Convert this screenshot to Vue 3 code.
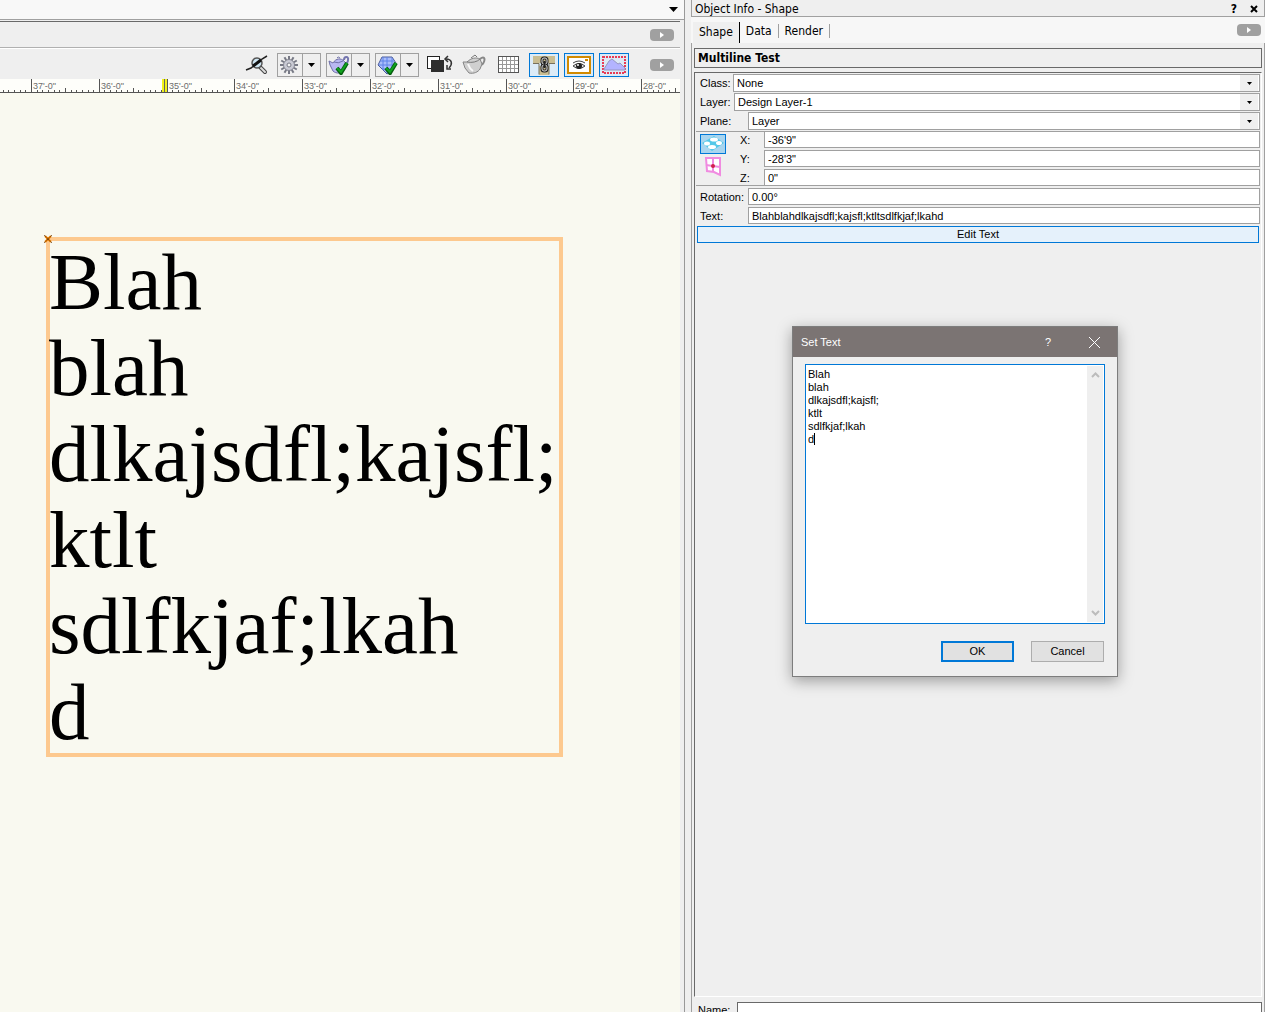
<script setup>
import { ref } from 'vue'

const lines = ref('Blah\nblah\ndlkajsdfl;kajsfl;\nktlt\nsdlfkjaf;lkah\nd')
const flatText = ref('Blahblahdlkajsdfl;kajsfl;ktltsdlfkjaf;lkahd')

const selects = [
  { id: 'class', label: 'Class:', value: 'None' },
  { id: 'layer', label: 'Layer:', value: 'Design Layer-1' },
  { id: 'plane', label: 'Plane:', value: 'Layer' }
]
const coords = [
  { id: 'x', label: 'X:', value: '-36\'9"' },
  { id: 'y', label: 'Y:', value: '-28\'3"' },
  { id: 'z', label: 'Z:', value: '0"' }
]

// Ruler: one foot is 67.8 units wide, divided into twelve inches
const foot = 67.8
const origin = 31
const feet = Array.from({ length: 10 }, (_, i) => ({
  x: Math.round(origin + i * foot),
  label: `${37 - i}'-0"`
}))
const inches = Array.from({ length: 121 }, (_, i) => i - 6)
  .filter((n) => n % 12 !== 0)
  .map((n) => ({ x: Math.round(origin + (n * foot) / 12), h: n % 6 === 0 ? 4 : 2 }))

const teeth = [0, 30, 60, 90, 120, 150, 180, 210, 240, 270, 300, 330]
</script>

<template>
  <div class="app">
    <main class="drawing">
      <div class="title-strip">
        <svg width="9" height="5" viewBox="0 0 9 5"><path d="M0 0h9L4.500 5z" fill="#000" /></svg>
      </div>
      <div class="mode-bar">
        <button class="pill" aria-label="Expand modes"><svg width="4" height="6"><path d="M0 0l4 3l-4 3z" fill="#fff" /></svg></button>
      </div>
      <div class="toolbar">
        <button class="tool" aria-label="Zoom line thickness">
          <svg width="28" height="22" viewBox="0 0 28 22">
            <path d="M17 13l5 5" stroke="#444" stroke-width="4" stroke-linecap="round" />
            <path d="M18 14l4 4" stroke="#ddd" stroke-width="2" stroke-linecap="round" />
            <circle cx="14" cy="9" r="5" fill="#cfe6f3" stroke="#555" stroke-width="1.500" />
            <path d="M3 16l5-2L19 5l5-3" fill="none" stroke="#222" stroke-width="1.500" />
            <path d="M10 12l8-6" stroke="#111" stroke-width="3" />
          </svg>
        </button>
        <div class="split">
          <button aria-label="Settings">
            <svg width="22" height="20" viewBox="0 0 22 20">
              <g transform="translate(10 10)">
                <rect v-for="t in teeth" :key="t" x="-1" y="-9" width="2" height="4" fill="#777985" :transform="`rotate(${t})`" />
                <circle r="5.500" fill="#c9cad4" stroke="#858793" />
                <circle r="2" fill="#f5f5f5" stroke="#777985" />
              </g>
            </svg>
          </button>
          <button class="drop" aria-label="Settings menu"><svg width="7" height="4"><path d="M0 0h7L3.500 4z" /></svg></button>
        </div>
        <div class="split">
          <button aria-label="Render mode">
            <svg width="22" height="20" viewBox="0 0 22 20">
              <path d="M16 5c0-4 5-4 4 0c0 3-2 4-4 5" fill="none" stroke="#7475ae" stroke-width="2" />
              <path d="M5 8L1 6l1 4l3 6c3 3 9 3 12-2c2-3 1-6-1-8c-3-3-8-3-11 2z" fill="#b9b8f2" stroke="#6f70a8" />
              <path d="M6 7q4 2 9-1M9 3q1-2 3 0" fill="none" stroke="#6f70a8" />
              <path d="M9 13l4 5l6-10" fill="none" stroke="#075f10" stroke-width="4" />
              <path d="M9 13l4 4l6-9" fill="none" stroke="#10a51e" stroke-width="2" />
            </svg>
          </button>
          <button class="drop" aria-label="Render mode menu"><svg width="7" height="4"><path d="M0 0h7L3.500 4z" /></svg></button>
        </div>
        <div class="split">
          <button aria-label="Projection">
            <svg width="22" height="20" viewBox="0 0 22 20">
              <path d="M1 10l4-8h10l4 6l-3 7l-6 4z" fill="#a9bdfb" stroke="#4a5c9c" />
              <path d="M3 6h14M2 10h17M5 14h11M6 2v13M10 2v16M15 3v11" fill="none" stroke="#5f82e8" />
              <path d="M9 13l4 5l6-10" fill="none" stroke="#075f10" stroke-width="4" />
              <path d="M9 13l4 4l6-9" fill="none" stroke="#10a51e" stroke-width="2" />
            </svg>
          </button>
          <button class="drop" aria-label="Projection menu"><svg width="7" height="4"><path d="M0 0h7L3.500 4z" /></svg></button>
        </div>
        <button class="tool" aria-label="Swap colours">
          <svg width="28" height="22" viewBox="0 0 28 22">
            <rect x="2.500" y="2.500" width="12" height="12" fill="#fff" stroke="#222" />
            <rect x="6" y="6" width="13" height="12" fill="#2d2d2d" />
            <path d="M21 5c6 0 7 5 3 9" fill="none" stroke="#333" stroke-width="1.500" />
            <path d="M23 2l-3 3l3 3M22 11v4h4" fill="none" stroke="#333" stroke-width="1.500" />
          </svg>
        </button>
        <button class="tool" aria-label="Model view">
          <svg width="28" height="22" viewBox="0 0 28 22">
            <path d="M20 5c5-4 6 1 2 6" fill="none" stroke="#888" stroke-width="2" />
            <path d="M7 8L3 8l2 6l4 5c5 1 9-1 11-4l2-5l-2-5c-4-2-9-1-13 3z" fill="#d0d0d0" stroke="#858585" />
            <path d="M7 8c5 1 10 0 13-3M11 4l4-3l2 2" fill="none" stroke="#777" />
            <path d="M8 10c1 3 2 5 5 7" fill="none" stroke="#f8f8f8" stroke-width="2" />
          </svg>
        </button>
        <button class="tool" aria-label="Grid">
          <svg width="28" height="22" viewBox="0 0 28 22">
            <rect x="3.500" y="2.500" width="20" height="16" fill="#fff" stroke="#555" />
            <path d="M7.500 3v15M11.500 3v15M15.500 3v15M19.500 3v15M4 6.500h19M4 10.500h19M4 14.500h19" stroke="#999" />
          </svg>
        </button>
        <button class="tool on" aria-label="Link">
          <svg width="28" height="22" viewBox="0 0 28 22">
            <path d="M3 2h22v7H3zM9 12h10v9H9z" fill="#c9bd92" />
            <path d="M3 9.500h6v11M25 9.500h-6v11" fill="none" stroke="#77705c" />
            <g fill="none" stroke="#222" stroke-width="3"><rect x="12" y="4" width="5" height="6" rx="2" /><rect x="12" y="11" width="5" height="6" rx="2" /></g>
            <g fill="none" stroke="#ddd"><rect x="12" y="4" width="5" height="6" rx="2" /><rect x="12" y="11" width="5" height="6" rx="2" /></g>
            <path d="M14.500 7v7" stroke="#222" stroke-width="2" />
          </svg>
        </button>
        <button class="tool on" aria-label="Visibility">
          <svg width="28" height="22" viewBox="0 0 28 22">
            <rect x="3" y="3" width="22" height="16" fill="#fff" stroke="#d28a00" stroke-width="2" />
            <rect x="20" y="5" width="3" height="2" fill="#d28a00" />
            <path d="M8 12q6-5 12 0q-6 5-12 0z" fill="#ddd" stroke="#444" />
            <path d="M8 9q6-4 12 0" fill="none" stroke="#444" />
            <circle cx="14" cy="12" r="3" fill="#222" /><circle cx="13" cy="11" r="1" fill="#fff" />
          </svg>
        </button>
        <button class="tool on" aria-label="Crop">
          <svg width="28" height="22" viewBox="0 0 28 22">
            <rect x="3" y="3" width="22" height="16" fill="#dce9f5" stroke="#e83b55" stroke-width="2" stroke-dasharray="2 1" />
            <path d="M4 15l5-8l3-2l6 5l2-1l5 5v2H4z" fill="#b3b4ff" stroke="#9797c0" />
          </svg>
        </button>
        <button class="pill" aria-label="Expand view bar"><svg width="4" height="6"><path d="M0 0l4 3l-4 3z" fill="#fff" /></svg></button>
      </div>
      <svg class="ruler" width="100%" height="14">
        <rect x="162" y="0" width="5" height="13" fill="#f2f21c" />
        <rect x="164" y="0" width="1" height="13" fill="#666" />
        <g fill="#555">
          <rect v-for="f in feet" :key="f.x" :x="f.x" y="0" width="1" height="13" />
          <rect v-for="t in inches" :key="t.x" :x="t.x" :y="13 - t.h" width="1" :height="t.h" />
          <rect x="0" y="13" width="100%" height="1" />
        </g>
        <text v-for="f in feet" :key="f.label" :x="f.x + 2" y="10">{{ f.label }}</text>
      </svg>
      <div class="canvas">
        <div class="text-object">
          <pre>{{ lines }}</pre>
          <svg class="locus" width="8" height="8" viewBox="0 0 8 8"><path d="M1 1l6 6M7 1l-6 6" stroke="#e07800" stroke-width="2" /><path d="M0 0l8 8M8 0l-8 8" stroke="#5b3510" stroke-dasharray="1 1" /></svg>
        </div>
      </div>
    </main>

    <aside class="info">
      <header class="info-title">
        <span>Object Info - Shape</span>
        <button aria-label="Help">?</button>
        <button aria-label="Close"><svg width="8" height="8" viewBox="0 0 8 8"><path d="M1 1l6 6M7 1l-6 6" stroke="#000" stroke-width="2" /></svg></button>
      </header>
      <nav class="tabs">
        <button class="active">Shape</button>
        <button>Data</button>
        <button>Render</button>
        <button class="pill" aria-label="Expand tabs"><svg width="4" height="6"><path d="M0 0l4 3l-4 3z" fill="#fff" /></svg></button>
      </nav>
      <div class="info-body">
        <h1>Multiline Test</h1>
        <section class="props">
          <div v-for="s in selects" :key="s.id" class="row" :class="s.id">
            <label :for="s.id">{{ s.label }}</label>
            <div class="pick">
              <select :id="s.id"><option>{{ s.value }}</option></select>
              <span class="arrow"><svg width="5" height="3"><path d="M0 0h5L2.500 3z" /></svg></span>
            </div>
          </div>
          <div class="coords">
            <div class="planes">
              <button class="on" aria-label="Layer plane">
                <svg width="24" height="18" viewBox="0 0 24 18">
                  <path d="M1 8L13 1l10 7l-12 8z" fill="#54c8e8" />
                  <g fill="#fff"><ellipse cx="13" cy="4.500" rx="4" ry="2" /><ellipse cx="6" cy="8.500" rx="3" ry="2" /><ellipse cx="18" cy="8" rx="3" ry="2" /><ellipse cx="11" cy="12" rx="4" ry="2" /></g>
                </svg>
              </button>
              <button aria-label="Screen plane">
                <svg width="24" height="22" viewBox="0 0 24 22">
                  <path d="M5 3h14v17l-6-3l-7-1z" fill="#fff" stroke="#f08be0" stroke-width="2" />
                  <path d="M12 3v13M5 10l14 2" stroke="#f08be0" stroke-width="2" /><circle cx="12" cy="11" r="2" fill="#d0204c" />
                </svg>
              </button>
            </div>
            <div class="xyz">
              <div v-for="c in coords" :key="c.id" class="row">
                <label :for="c.id">{{ c.label }}</label>
                <input :id="c.id" type="text" :value="c.value">
              </div>
            </div>
          </div>
          <div class="row">
            <label for="rotation">Rotation:</label>
            <input id="rotation" type="text" value="0.00°">
          </div>
          <div class="row">
            <label for="text">Text:</label>
            <input id="text" v-model="flatText" type="text">
          </div>
          <button class="edit">Edit Text</button>
        </section>
        <div class="name-row">
          <label for="name">Name:</label>
          <input id="name" type="text">
        </div>
      </div>

      <div class="dialog" role="dialog" aria-labelledby="dialog-title">
        <header>
          <span id="dialog-title">Set Text</span>
          <button aria-label="Help">?</button>
          <button aria-label="Close"><svg width="11" height="11" viewBox="0 0 11 11"><path d="M0 0l11 11M11 0L0 11" stroke="#fff" /></svg></button>
        </header>
        <div class="editor">
          <textarea v-model="lines" aria-label="Text" spellcheck="false"></textarea>
          <span class="caret"></span>
          <div class="scroll">
            <svg width="9" height="6" viewBox="0 0 9 6"><path d="M1 5l3.500-3.500L8 5" fill="none" stroke="#bcbcbc" stroke-width="2" /></svg>
            <svg width="9" height="6" viewBox="0 0 9 6"><path d="M1 1l3.500 3.500L8 1" fill="none" stroke="#bcbcbc" stroke-width="2" /></svg>
          </div>
        </div>
        <footer>
          <button class="ok">OK</button>
          <button>Cancel</button>
        </footer>
      </div>
    </aside>
  </div>
</template>

<style>
body {
  overflow: hidden;
}
</style>

<style scoped>
* {
  box-sizing: border-box;
}
.app {
  display: grid;
  grid-template-columns: minmax(0, 685fr) minmax(0, 580fr);
  height: 100vh;
  overflow: hidden;
  background: #efefef;
  color: #000;
  font: 11px/13px "Liberation Sans", Arial, sans-serif;
}
button, input, select, textarea {
  font: inherit;
  color: inherit;
  margin: 0;
  padding: 0;
  border: 0;
  border-radius: 0;
  background: none;
  outline: none;
}
button {
  display: flex;
  align-items: center;
  justify-content: center;
}
svg {
  display: block;
  flex: none;
}

/* Drawing side */
.drawing {
  display: flex;
  flex-direction: column;
  border-right: 1px solid #999;
}
.title-strip {
  display: flex;
  justify-content: flex-end;
  align-items: center;
  height: 20px;
  padding-right: 6px;
  background: #f8f8f8;
  border-bottom: 1px solid #a0a0a0;
}
.mode-bar {
  display: flex;
  justify-content: flex-end;
  align-items: center;
  height: 27px;
  margin: 1px 4px 0 0;
  padding-right: 6px;
  border-top: 1px solid #696969;
  border-bottom: 1px solid #b0b0b0;
}
.pill {
  width: 24px;
  height: 12px;
  border-radius: 4px;
  background: #a0a0a0;
}
.toolbar {
  display: flex;
  justify-content: flex-end;
  align-items: center;
  gap: 5px;
  height: 31px;
  margin-right: 4px;
  padding: 2px 6px 0 0;
  border-top: 1px solid #fff;
}
.toolbar .pill {
  margin-left: 16px;
}
.tool {
  width: 30px;
  height: 24px;
}
.tool.on {
  border: 1px solid #0078d7;
  background: #dcebf7;
}
.split {
  display: flex;
  width: 44px;
  height: 24px;
  border: 1px solid #a0a0a0;
}
.split button {
  flex: 1;
}
.split .drop {
  flex: none;
  width: 18px;
  border-left: 1px solid #a0a0a0;
}
.ruler {
  width: calc(100% - 4px);
  background: #fefefa;
}
.ruler text {
  font: 9px "Liberation Sans", Arial, sans-serif;
  fill: #6c6c6c;
}
.canvas {
  flex: 1;
  margin-right: 4px;
  padding: 146px 48px;
  background: #f9f9f0;
}
.text-object {
  position: relative;
  width: max-content;
  padding: 0 4px 0 1px;
  outline: 4px solid #fdc98f;
  outline-offset: -2px;
}
.text-object pre {
  position: relative;
  margin: 0;
  font: 81px/86px Georgia, "Liberation Serif", serif;
}
.locus {
  position: absolute;
  left: -4px;
  top: -4px;
}

/* Object info palette */
.info {
  position: relative;
  display: flex;
  flex-direction: column;
  min-height: 0;
  margin-left: 6px;
}
.info-title, .tabs, h1 {
  font-family: Tahoma, "DejaVu Sans Condensed", "DejaVu Sans", sans-serif;
  font-stretch: condensed;
}
.info-title {
  display: flex;
  align-items: center;
  gap: 6px;
  height: 17px;
  padding: 2px 3px 0 3px;
  border: 1px solid #a0a0a0;
  border-top: 0;
  font-size: 12px;
}
.info-title span {
  flex: 1;
}
.info-title button {
  width: 14px;
  font-weight: bold;
}
.tabs {
  display: flex;
  align-items: center;
  height: 26px;
  padding: 0 4px 0 2px;
  background: #f7f7f7;
  font-size: 12px;
}
.tabs button:not(.pill) {
  height: 14px;
  margin-top: 2px;
  padding: 0 6px;
  border-right: 1px solid #a0a0a0;
}
.tabs button:not(.pill).active {
  height: 21px;
  align-self: flex-end;
  border-right-color: #000;
  background: #efefef;
}
.tabs .pill {
  margin-left: auto;
}
.info-body {
  flex: 1;
  display: flex;
  flex-direction: column;
  min-height: 0;
  padding: 5px 2px 0 2px;
  border-left: 1px solid #a0a0a0;
  border-right: 1px solid #a0a0a0;
}
h1 {
  margin: 0;
  height: 20px;
  padding-left: 3px;
  border: 1px solid #696969;
  font-size: 12px;
  font-weight: bold;
  line-height: 19px;
}
.props {
  flex: 1;
  display: flex;
  flex-direction: column;
  gap: 1px;
  margin-top: 4px;
  padding: 1px 1px 0 1px;
  border: 1px solid #696969;
  border-right-color: #fff;
  border-bottom-color: #fff;
}
.row {
  display: flex;
  height: 18px;
}
.row label {
  flex: none;
  width: 52px;
  padding-left: 4px;
  line-height: 19px;
}
.class label {
  width: 37px;
}
.layer label {
  width: 38px;
}
.pick {
  position: relative;
  flex: 1;
}
.row input, select {
  width: 100%;
  min-width: 0;
  height: 18px;
  padding: 0 3px;
  border: 1px solid #a0a0a0;
  background: #fff;
}
.row input {
  flex: 1;
  height: 17px;
}
select {
  appearance: none;
}
.arrow {
  position: absolute;
  top: 1px;
  right: 2px;
  bottom: 1px;
  width: 18px;
  display: grid;
  place-items: center;
  background: #efefef;
  pointer-events: none;
}
.coords {
  display: flex;
  margin-bottom: 1px;
  border-top: 1px solid #a0a0a0;
  border-bottom: 1px solid #a0a0a0;
}
.planes {
  display: flex;
  flex-direction: column;
  gap: 2px;
  width: 40px;
  padding: 2px 4px;
}
.planes button {
  width: 26px;
  height: 20px;
}
.xyz {
  flex: 1;
  display: flex;
  flex-direction: column;
  gap: 1px;
  margin: -1px 0 -2px;
}
.planes .on {
  border: 1px solid #0078d7;
  background: #a9d5ef;
}
.coords label {
  width: 28px;
}
.edit {
  height: 17px;
  margin: 0 1px;
  border: 1px solid #0078d7;
  background: #e5f1fb;
}
.name-row {
  display: flex;
  height: 10px;
  margin-top: 5px;
}
.name-row label {
  width: 43px;
  padding: 2px 4px 0 4px;
}
.name-row input {
  flex: 1;
  border: 1px solid #696969;
  border-bottom: 0;
  background: #fff;
}

/* Set Text dialog */
.dialog {
  position: absolute;
  left: 101px;
  top: 326px;
  width: 326px;
  border: 1px solid #7d7d7d;
  background: #efefef;
  box-shadow: 0 4px 14px rgba(0, 0, 0, 0.35);
}
.dialog header {
  display: flex;
  height: 30px;
  padding-left: 8px;
  background: #7b7473;
  color: #fff;
  line-height: 30px;
}
.dialog header span {
  flex: 1;
}
.dialog header button {
  width: 46px;
}
.editor {
  position: relative;
  display: flex;
  height: 260px;
  margin: 7px 12px 0;
  padding: 1px;
  border: 1px solid #0078d7;
  background: #fff;
}
.editor textarea {
  flex: 1;
  resize: none;
  overflow: hidden;
  padding: 2px 1px 0;
  line-height: 13px;
}
.caret {
  position: absolute;
  left: 8px;
  top: 68px;
  width: 1px;
  height: 12px;
  background: #000;
}
.scroll {
  display: flex;
  flex-direction: column;
  justify-content: space-between;
  align-items: center;
  width: 16px;
  padding: 6px 0;
  background: #efefef;
}
.dialog footer {
  display: flex;
  justify-content: flex-end;
  gap: 17px;
  padding: 17px 13px 14px;
}
.dialog footer button {
  width: 73px;
  height: 21px;
  border: 1px solid #adadad;
  background: #e1e1e1;
}
.dialog footer .ok {
  border: 2px solid #0078d7;
}
</style>
